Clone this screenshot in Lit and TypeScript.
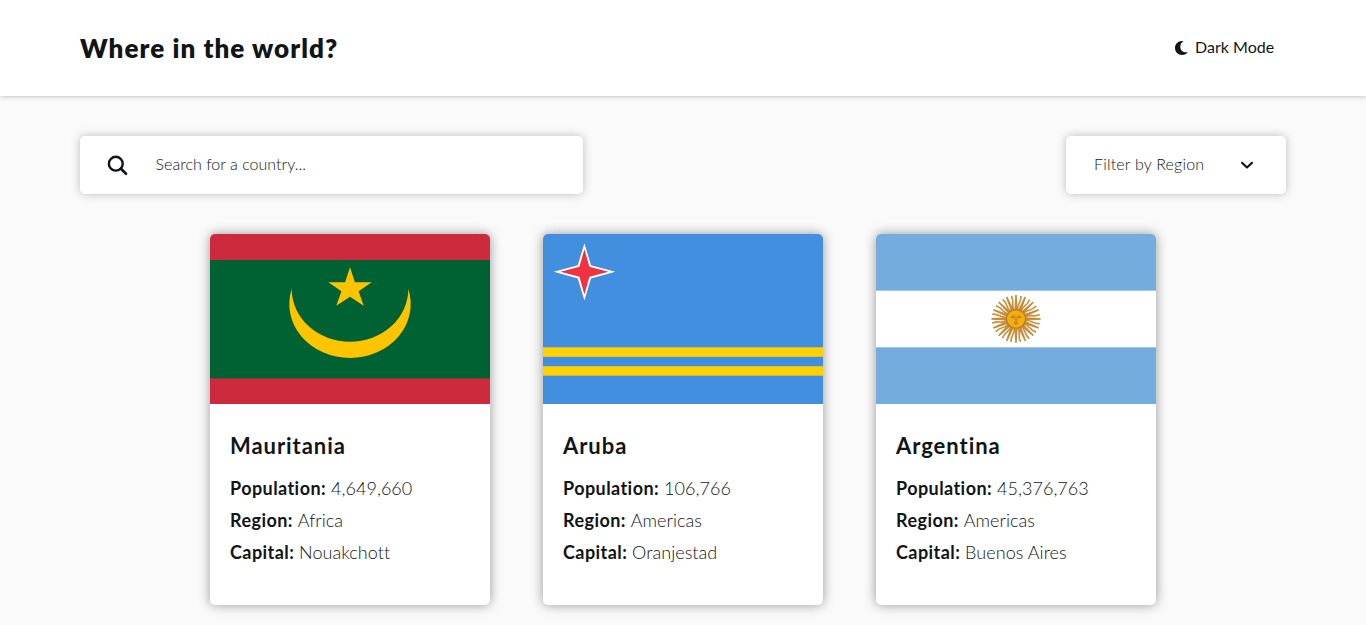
import { LitElement, html, css, svg } from "lit";
import { customElement, property } from "lit/decorators.js";

interface Country {
  name: string;
  population: string;
  region: string;
  capital: string;
  flag: unknown;
}

const mauritania = svg`
  <rect width="280" height="170" fill="#cd2a3e"/>
  <rect y="26" width="280" height="118.4" fill="#006233"/>
  <path d="M81.7 55A60.7 54 0 1 0 198.3 55A58.3 52.8 0 0 1 81.7 55Z" fill="#ffc400"/>
  <path d="M140 33.3L144.9 48.2H161.7L148.6 57.3L153.7 71.7L140 62.7L126.3 71.7L131.4 57.3L118.3 48.2H135.1Z" fill="#ffc400"/>`;

const aruba = svg`
  <rect width="280" height="170" fill="#418fde"/>
  <rect y="113.33" width="280" height="9.45" fill="#ffd100"/>
  <rect y="132.22" width="280" height="9.45" fill="#ffd100"/>
  <path d="M41.4 9.2L48 31.2L72.3 37.8L48 44.4L41.4 66.4L34.8 44.4L10.7 37.8L34.8 31.2Z" fill="#fff"/>
  <path d="M41.4 15.2L46.4 32.8L65.5 37.8L46.4 42.8L41.4 60.4L36.4 42.8L17.5 37.8L36.4 32.8Z" fill="#ef3340"/>`;

const rays = Array.from({ length: 32 }, (_, i) => i * 11.25);

const argentina = svg`
  <rect width="280" height="170" fill="#74acdf"/>
  <rect y="56.67" width="280" height="56.67" fill="#fff"/>
  <g transform="translate(140 84.9) scale(1 .97)">
    ${rays.map((a, i) =>
      i % 2 === 0
        ? svg`<path transform="rotate(${a})" d="M-1.6 -9L-.8 -24.6H.8L1.6 -9Z" fill="#c58c3c"/>`
        : svg`<path transform="rotate(${a})" d="M0 -9Q-1.2 -13 0 -16.5T.2 -24.2" fill="none" stroke="#c99040" stroke-width="1.7"/>`
    )}
    <circle r="9.6" fill="#f2ae10" stroke="#b87a1c" stroke-width="1.2"/>
    <path d="M-5.2 -2.2Q-3.2 -4 -1.2 -2.4L-1 1M5.2 -2.2Q3.2 -4 1.2 -2.4L1 1M-4.8 -1.4H-1.8M4.8 -1.4H1.8M-1.8 2.4H1.8M-2 4.6Q0 3.4 2 4.6Q0 6.4 -2 4.6" fill="none" stroke="#b5761a" stroke-width=".9"/>
  </g>`;

const countries: Country[] = [
  { name: "Mauritania", population: "4,649,660", region: "Africa", capital: "Nouakchott", flag: mauritania },
  { name: "Aruba", population: "106,766", region: "Americas", capital: "Oranjestad", flag: aruba },
  { name: "Argentina", population: "45,376,763", region: "Americas", capital: "Buenos Aires", flag: argentina },
];

@customElement("country-card")
export class CountryCard extends LitElement {
  @property({ attribute: false }) country!: Country;

  static styles = css`
    :host {
      display: block;
      width: 280px;
      height: 371px;
      border-radius: 5px;
      overflow: hidden;
      background: #fff;
      box-shadow: 0 0 12px rgba(0, 0, 0, 0.4);
    }
    .flag {
      display: block;
      width: 280px;
      height: 170px;
    }
    .body {
      padding: 26px 20px 0;
    }
    .name {
      margin: 0 0 10px;
      font-size: 22px;
      line-height: 32px;
      font-weight: 700;
      letter-spacing: 0.95px;
    }
    .row {
      font-size: 18px;
      line-height: 32px;
      font-weight: 300;
      white-space: nowrap;
      font-variant-ligatures: none;
    }
    .label {
      font-weight: 700;
      letter-spacing: 0.43px;
    }
    .value {
      letter-spacing: 0.05px;
    }
  `;

  render() {
    const c = this.country;
    return html`
      <svg class="flag" viewBox="0 0 280 170">${c.flag}</svg>
      <div class="body">
        <h2 class="name">${c.name}</h2>
        <div class="row"><span class="label">Population:</span> <span class="value">${c.population}</span></div>
        <div class="row"><span class="label">Region:</span> <span class="value">${c.region}</span></div>
        <div class="row"><span class="label">Capital:</span> <span class="value">${c.capital}</span></div>
      </div>
    `;
  }
}

@customElement("app-root")
export class AppRoot extends LitElement {
  static styles = css`
    :host {
      display: block;
      height: 625px;
      overflow: hidden;
      background: #fafafa;
      color: #111517;
      font-family: Lato, "Open Sans", sans-serif;
    }
    .header {
      display: flex;
      align-items: center;
      justify-content: space-between;
      height: 96px;
      box-sizing: border-box;
      padding: 0 91px 0 80px;
      background: #fff;
      box-shadow: 0 0 5px rgba(0, 0, 0, 0.3);
    }
    .title {
      margin: 0;
      font-size: 26px;
      line-height: 36px;
      font-weight: 800;
      letter-spacing: 1.07px;
    }
    .mode {
      display: flex;
      align-items: center;
      gap: 7px;
      font-size: 16px;
      line-height: 24px;
      font-weight: 400;
    }
    .mode-text {
      padding-bottom: 2px;
      width: 80px;
      letter-spacing: 0.03px;
      white-space: nowrap;
    }
    .moon {
      width: 13px;
      height: 14px;
    }
    .tools {
      display: flex;
      justify-content: space-between;
      padding: 40px 80px;
    }
    .box {
      display: flex;
      align-items: center;
      box-sizing: border-box;
      height: 58px;
      border-radius: 5px;
      background: #fff;
      box-shadow: 0 0 10px rgba(0, 0, 0, 0.25);
      font-size: 16px;
      font-weight: 300;
    }
    .search {
      width: 503px;
      padding-left: 27px;
      gap: 27.5px;
    }
    .filter {
      width: 220px;
      padding: 0 32px 0 28px;
      justify-content: space-between;
    }
    .placeholder,
    .filter-text {
      padding-bottom: 3px;
    }
    .placeholder {
      letter-spacing: 0.03px;
    }
    .filter-text {
      letter-spacing: 0.2px;
    }
    .glass {
      width: 21px;
      height: 21px;
    }
    .chevron {
      width: 14px;
      height: 10px;
    }
    .grid {
      display: grid;
      grid-template-columns: repeat(3, 280px);
      justify-content: center;
      gap: 53px;
    }
  `;

  render() {
    return html`
      <header class="header">
        <h1 class="title">Where in the world?</h1>
        <div class="mode">
          <svg class="moon" viewBox="0 0 13 14"><path d="M7 0C3 .1 0 3.1 0 7S3.1 14 7 14C9.5 14 11.6 12.9 12.7 11.1C8.4 11.7 5.3 9.4 5.3 5.9C5.3 3.4 6.5 1.5 8.6 .3Q7.9 0 7 0Z" fill="#111517"/></svg>
          <span class="mode-text">Dark Mode</span>
        </div>
      </header>
      <section class="tools">
        <div class="box search">
          <svg class="glass" viewBox="0 0 21 21" fill="none" stroke="#111517"><circle cx="8.8" cy="8.7" r="6.9" stroke-width="2.4"/><path d="M14 13.8L19 18.8" stroke-width="2.7" stroke-linecap="round"/></svg>
          <span class="placeholder">Search for a country...</span>
        </div>
        <div class="box filter">
          <span class="filter-text">Filter by Region</span>
          <svg class="chevron" viewBox="0 0 14 10"><path d="M2 2.8L7 7.6L12 2.8" fill="none" stroke="#111517" stroke-width="2.1" stroke-linecap="round" stroke-linejoin="round"/></svg>
        </div>
      </section>
      <main class="grid">
        ${countries.map((c) => html`<country-card .country=${c}></country-card>`)}
      </main>
    `;
  }
}
